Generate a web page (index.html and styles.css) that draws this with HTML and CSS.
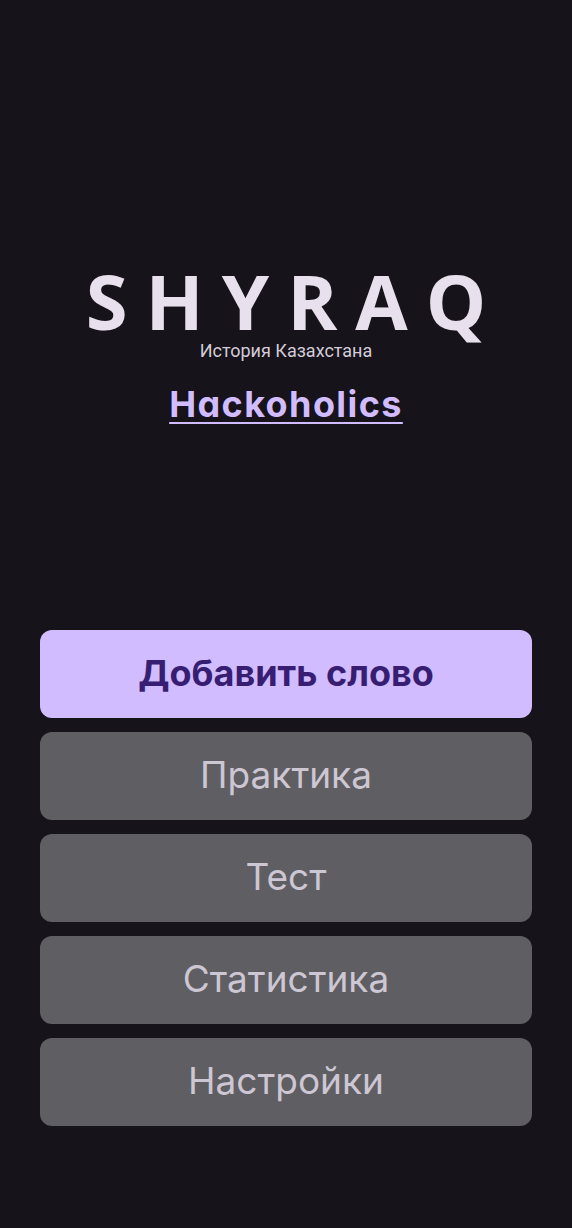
FILE: index.html
```html
<!DOCTYPE html>
<html lang="ru">
<head>
<meta charset="utf-8">
<link rel="stylesheet" href="styles.css">
</head>
<body>
<main class="screen">
  <header class="brand">
    <h1 class="logo">SHYRAQ</h1>
    <p class="subtitle">История Казахстана</p>
    <a class="team" href="#">Hackoholics</a>
  </header>
  <nav class="menu">
    <button class="btn btn-primary">Добавить слово</button>
    <button class="btn">Практика</button>
    <button class="btn">Тест</button>
    <button class="btn">Статистика</button>
    <button class="btn">Настройки</button>
  </nav>
</main>
</body>
</html>
```
FILE: styles.css
```css
html, body {
  margin: 0;
  padding: 0;
  background: #16131a;
}
.screen {
  height: 1228px;
  display: flex;
  flex-direction: column;
  justify-content: space-between;
  box-sizing: border-box;
  padding: 266px 40px 102px;
  font-family: Roboto, "Noto Sans", sans-serif;
}
.brand {
  display: flex;
  flex-direction: column;
  align-items: center;
}
.logo {
  margin: 0;
  font-family: "Open Sans", Roboto, sans-serif;
  font-weight: 700;
  font-size: 76px;
  line-height: 70px;
  letter-spacing: 18px;
  margin-right: -18px;
  color: #e8e0ec;
}
.subtitle {
  margin: 5px 0 0;
  font-size: 18px;
  line-height: 20px;
  color: #d4ccd8;
}
.team {
  margin-top: 21px;
  font-family: Inter, Roboto, sans-serif;
  font-feature-settings: "cv11";
  font-weight: 700;
  font-size: 36px;
  line-height: 44px;
  letter-spacing: 1.4px;
  color: #d0bcff;
  text-decoration: underline;
  text-decoration-thickness: 2px;
  text-underline-offset: 5px;
}
.menu {
  display: flex;
  flex-direction: column;
  gap: 14px;
}
.btn {
  height: 88px;
  border: none;
  border-radius: 12px;
  background: #5f5e63;
  color: #cdc6d3;
  font-family: Inter, Roboto, sans-serif;
  font-size: 37px;
  font-weight: 400;
  padding: 0 0 3px;
}
.btn-primary {
  background: #d0bcfe;
  color: #381e72;
  font-size: 36px;
  font-weight: 700;
}
```
